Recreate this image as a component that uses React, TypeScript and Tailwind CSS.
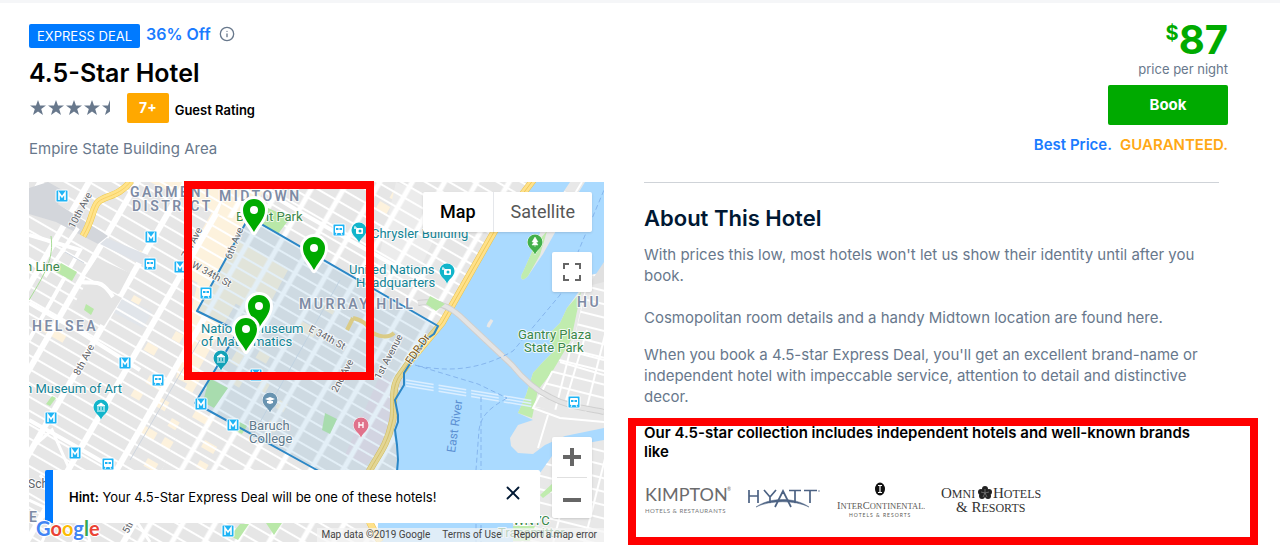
import React, { useState } from 'react';
import { Info, X } from 'lucide-react';
import clsx from 'clsx';

type Point = { x: number; y: number };

const hotelPins: Point[] = [
  { x: 254, y: 210 },
  { x: 314, y: 248 },
  { x: 259, y: 306 },
  { x: 246, y: 329 },
];

const subwayStops: Point[] = [
  { x: 62, y: 196 },
  { x: 151, y: 237 },
  { x: 180, y: 267 },
  { x: 125, y: 363 },
  { x: 51, y: 418 },
  { x: 75, y: 453 },
  { x: 201, y: 404 },
  { x: 233, y: 425 },
  { x: 256, y: 375 },
  { x: 228, y: 531 },
];

const trainStops: Point[] = [
  { x: 150, y: 264 },
  { x: 206, y: 293 },
  { x: 158, y: 380 },
  { x: 108, y: 464 },
  { x: 339, y: 230 },
  { x: 574, y: 402 },
];

const districtLabels = [
  { text: 'GARMENT', x: 130, y: 197 },
  { text: 'DISTRICT', x: 132, y: 211 },
  { text: 'MIDTOWN', x: 219, y: 201 },
  { text: 'HELSEA', x: 32, y: 331 },
  { text: 'MURRAY HILL', x: 299, y: 309 },
  { text: 'HU', x: 577, y: 307 },
  { text: 'E N', x: 29, y: 522 },
];

const streetLabels = [
  { text: '10th Ave', x: 74, y: 229, rotate: -62 },
  { text: '8th Ave', x: 79, y: 376, rotate: -62 },
  { text: '7th Ave', x: 187, y: 259, rotate: -62 },
  { text: '6th Ave', x: 231, y: 260, rotate: -68 },
  { text: 'W 34th St', x: 191, y: 267, rotate: 28 },
  { text: 'E 34th St', x: 308, y: 331, rotate: 28 },
  { text: '2nd Ave', x: 337, y: 393, rotate: -62 },
  { text: '1st Avenue', x: 380, y: 380, rotate: -62 },
  { text: '5th', x: 128, y: 534, rotate: -62 },
];

const beigeBlocks = [
  [41, 320, 30, 9], [140, 250, 12, 9], [134, 295, 9, 20], [176, 331, 9, 9], [150, 375, 20, 9], [135, 388, 10, 9],
  [160, 397, 11, 10], [172, 418, 9, 9], [142, 424, 18, 9], [165, 437, 10, 9], [148, 458, 12, 9], [148, 342, 12, 9],
  [176, 470, 9, 8], [254, 480, 10, 8], [196, 410, 20, 8], [205, 440, 14, 8], [200, 460, 10, 8], [194, 372, 9, 20],
  [240, 345, 9, 20], [235, 375, 10, 9], [260, 350, 12, 9], [262, 380, 9, 10], [270, 420, 10, 9], [280, 400, 9, 9],
  [394, 190, 14, 9], [404, 200, 22, 9], [380, 201, 12, 9], [300, 320, 20, 9], [325, 300, 14, 9], [420, 215, 9, 9],
];

const SHORE =
  'M29 182H533L494 233L443 322L438 327L433 334L424 341L421 349L413 359L404 373V385L395 400L398 420L394 435L398 455L396 470L378 523V542H29Z';
const QUEENS =
  'M604 272L590 275L580 290L567 308L560 323L548 335L555 350L543 362L533 373L526 395L518 413L533 420L518 425L510 438L511 446L518 453L533 454L545 445L565 436L604 428Z';
const GREENPOINT = 'M604 440L565 447L552 456L540 473V517L513 523V542H604Z';
const DEAL_AREA =
  'M249 217L438 326L434 334L424 341L421 348L413 359L404 373V385L395 400L398 415V422L395 430L397 445L398 460L396 484H342L315 469L195 403L221 360L238 331L197 311Z';

const HotelPin: React.FC<Point> = ({ x, y }) => (
  <g transform={`translate(${x} ${y})`}>
    <path
      d="M0 22C-4 14-11 9-11 0A11 11 0 1 1 11 0C11 9 4 14 0 22Z"
      fill="#00aa00"
      stroke="#fff"
      strokeWidth="6"
      strokeLinejoin="round"
      paintOrder="stroke"
    />
    <circle r="4" fill="#fff" />
  </g>
);

const PlacePin: React.FC<Point & { color: string; children?: React.ReactNode }> = ({ x, y, color, children }) => (
  <g transform={`translate(${x} ${y})`}>
    <path
      d="M0 13C-1 8-7.500 6-7.500 0A7.500 7.500 0 1 1 7.500 0C7.500 6 1 8 0 13Z"
      fill={color}
      stroke="#fff"
      strokeWidth="1"
      paintOrder="stroke"
    />
    {children}
  </g>
);

const Museum = () => <path d="M-4-1L0-4L4-1ZM-3 0V3M0 0V3M3 0V3M-4 4H4" fill="#fff" stroke="#fff" strokeWidth="1" />;

const Camera = () => (
  <g>
    <rect x="-3" y="-2" width="7" height="6" rx="1" fill="#fff" />
    <circle cx="1" cy="1" r="1.500" fill="#12b5cb" />
    <path d="M-4-4V-1M-5-2H-2" stroke="#fff" />
  </g>
);

const CityMap: React.FC = () => (
  <svg
    viewBox="29 182 575 360"
    preserveAspectRatio="xMidYMid slice"
    className="block h-full w-full font-[Roboto,sans-serif]"
    role="img"
    aria-label="Map of the Empire State Building area"
  >
    <defs>
      <pattern id="blocks" width="42" height="12" patternUnits="userSpaceOnUse" patternTransform="rotate(30)">
        <path d="M0 5H42" stroke="#fff" strokeWidth="2" />
        <path d="M0 0V12M42 0V12" stroke="#fff" strokeWidth="6" />
      </pattern>
      <pattern id="smallBlocks" width="28" height="12" patternUnits="userSpaceOnUse" patternTransform="rotate(30)">
        <path d="M0 5H28" stroke="#fff" strokeWidth="2" />
        <path d="M0 0V12M28 0V12" stroke="#fff" strokeWidth="5" />
      </pattern>
      <pattern id="queensBlocks" width="30" height="13" patternUnits="userSpaceOnUse" patternTransform="rotate(14)">
        <path d="M0 6H30M8 0V13" stroke="#fff" strokeWidth="2" />
      </pattern>
      <clipPath id="manhattan">
        <path d={SHORE} />
      </clipPath>
    </defs>

    <rect x="29" y="182" width="575" height="360" fill="#aadaff" />

    {/* Manhattan */}
    <g clipPath="url(#manhattan)">
      <rect x="29" y="182" width="575" height="360" fill="#e6e6e6" />
      <path d="M150 182H268L238 240L288 270L262 318L178 272L212 212Z" fill="#fdf2dd" />
      <path d="M200 272L240 296L190 385L176 378Z" fill="#fdf2dd" />
      <g transform="rotate(30)">
        {beigeBlocks.map(([x, y, w, h], i) => {
          // page position turned into the rotated street grid
          const u = x * 0.866 + y * 0.5;
          const v = y * 0.866 - x * 0.5;
          return <rect key={i} x={u} y={v} width={w} height={h} fill="#fdf2dd" />;
        })}
      </g>
      <path d="M120 295L152 312L143 328L113 312Z" fill="#e1e5ea" />
      <path d="M396 182L450 205L410 290L375 275Z" fill="#ececec" />
      <path d="M380 375L396 384L388 440L366 465L345 455Z" fill="#ebdfe5" />
      <path d="M29 182H230L217 215L250 222L197 311L238 331L175 440L130 542H29Z" fill="url(#blocks)" />
      <path d="M230 182H540V542H130L175 440L238 331L197 311L250 222L217 215Z" fill="url(#smallBlocks)" />
      <path d="M29 188L48 182L66 192L58 204L86 222L108 236L98 244L56 222L29 214Z" fill="#d3d6db" />
      <path d="M107 238L150 256L145 266L100 244Z" fill="#dfe3e9" />
      <path d="M88 280L122 298L104 326L72 308Z" fill="#e4e4e4" />
      <path d="M97 258L130 273L119 294L85 276Z" fill="#e4e4e4" />
      <path d="M29 260L46 275L78 228M80 282C98 284 100 278 113 297M29 303L80 332L140 370M29 420L70 443L120 472M29 235L80 250L52 300L29 340M250 182L300 212L360 246L420 280" stroke="#fff" strokeWidth="4" fill="none" />
      <path d="M29 450L52 430L72 475M40 475L60 500L42 542M70 470L90 542M29 500L80 524L150 510M110 480L150 542" stroke="#fff" strokeWidth="3" fill="none" />
      <path d="M65 252L84 263M200 340L130 460" stroke="#cfd6df" strokeWidth="1" fill="none" />
      <path d="M61 263L77 272L72 281L56 272ZM86 304L94 309L91 315L84 310ZM234 419L247 426L242 434L230 428ZM209 378L228 388L214 408L203 402ZM268 208L290 218L278 234L257 223ZM325 413L337 419L330 434L322 430ZM240 524L249 524L238 540L230 536ZM52 396L56 398L50 406L46 404ZM266 523L282 523L274 535Z" fill="#b9e8a8" />
      <path d="M51 236C54 258 46 272 29 300" stroke="#a9dd98" strokeWidth="1" fill="none" />
      <path d="M340 280L250 440" stroke="#d6dde5" strokeWidth="1" fill="none" />
      <path d="M131 181C120 196 104 196 98 202C92 209 93 219 83 236" stroke="#eec94d" strokeWidth="7" fill="none" />
      <path d="M131 181C120 196 104 196 98 202C92 209 93 219 83 236" stroke="#ffe38b" strokeWidth="6" fill="none" />
      <path d="M131 181C120 196 104 196 98 202C92 209 93 219 83 236" stroke="#f7d065" strokeWidth="1" fill="none" />
      <path d="M353 318C362 320 371 326 368 332M353 318L347 330M369 330C378 338 389 338 394 333" stroke="#f4d478" strokeWidth="4" fill="none" />
    </g>

    {/* Roosevelt Island */}
    <path d="M585 182L562 220L543 254L528 276C522 283 519 278 523 272L535 245L546 218L570 182Z" fill="#e8e8e8" />
    <path d="M547 231L540 255L528 276C522 283 519 278 523 272L535 245Z" fill="#c0ecae" />
    <path d="M582 182L554 228M546 210L562 219M564 192L574 197" stroke="#fff" strokeWidth="2" fill="none" />

    {/* Queens and Greenpoint */}
    <path d={QUEENS} fill="#e8e8e8" />
    <path d="M581 292L567 308L560 323L548 335L555 350L543 362L533 373L526 395L518 413L532 418L538 390L552 372L571 340Z" fill="#c0ecae" />
    <path d="M588 276L604 272V413L566 411L533 407L552 370L574 340Z" fill="url(#queensBlocks)" />
    <path d="M552 372L533 408L560 418L604 422M548 415L538 448M560 362L604 375M566 350L604 360M587 330L566 400" stroke="#fff" strokeWidth="2" fill="none" />
    <path d={GREENPOINT} fill="#e8e8e8" />
    <path d={GREENPOINT} fill="url(#queensBlocks)" />
    <path d="M540 495L553 483L556 488L543 498ZM513 526L535 526L530 541H513Z" fill="#c0ecae" />
    <path d="M588 286L604 262V282Z" fill="#e0e0e0" />

    {/* Expressway and bridges */}
    <path d="M534 179L494 232L442 323L410 361L398 378C390 392 396 412 392 423C387 446 378 455 370 470L370 523L380 542" stroke="#e9c34c" strokeWidth="7" fill="none" />
    <path d="M534 179L494 232L442 323L410 361L398 378C390 392 396 412 392 423C387 446 378 455 370 470L370 523L380 542" stroke="#ffe18a" strokeWidth="6" fill="none" />
    <path d="M534 179L494 232L442 323L410 361L398 378C390 392 396 412 392 423C387 446 378 455 370 470" stroke="#efc958" strokeWidth="1" fill="none" />
    <path d="M418 303C436 300 450 307 460 316L512 365C520 375 533 389 550 397C568 407 585 408 604 412" stroke="#cfcfcf" strokeWidth="6" fill="none" />
    <path d="M418 303C436 300 450 307 460 316L512 365C520 375 533 389 550 397C568 407 585 408 604 412" stroke="#e4e4e4" strokeWidth="4" fill="none" />
    <path d="M430 296L445 304L436 311L426 304Z" fill="#b9e8a8" />
    <path d="M406 380L535 401M406 383L535 404M406 386L535 407" stroke="#dbeeff" strokeWidth="1.500" strokeDasharray="28 5" fill="none" />
    <path d="M489 324L492 320L488 327Z" stroke="#e8e8e8" strokeWidth="3" />
    <path d="M415 365L478 384L507 398M418 366C450 372 480 370 513 351L560 295L604 190M507 398C490 408 481 415 479 430L476 470M481 397V542M476 524V542" stroke="#86b6ee" strokeWidth="1" strokeDasharray="5 3" fill="none" />

    {/* Deal area */}
    <path d={DEAL_AREA} fill="#5ba3cf" fillOpacity="0.17" stroke="#2c87c6" strokeWidth="2" strokeLinejoin="round" />

    {subwayStops.map(({ x, y }) => (
      <g key={`${x}-${y}`} transform={`translate(${x} ${y})`}>
        <rect x="-6" y="-6" width="12" height="12" rx="1" fill="#1eb4f5" stroke="#fff" strokeWidth="1" />
        <path d="M-3 4V-3L0 1L3-3V4" stroke="#fff" strokeWidth="1.600" fill="none" />
      </g>
    ))}
    {trainStops.map(({ x, y }) => (
      <g key={`${x}-${y}`} transform={`translate(${x} ${y})`}>
        <rect x="-6" y="-6" width="12" height="12" rx="1" fill="#1eb4f5" stroke="#fff" strokeWidth="1" />
        <rect x="-4" y="-4" width="8" height="7" rx="1" fill="#fff" />
        <path d="M-3-2H-.5V0H-3ZM.5-2H3V0H.5Z" fill="#1eb4f5" />
        <path d="M-2 3L-3 5M2 3L3 5" stroke="#fff" />
      </g>
    ))}

    {/* Labels */}
    <g stroke="#fff" strokeWidth="2" strokeOpacity="0.8" strokeLinejoin="round" paintOrder="stroke">
      <g fill="#7e8ca5" fontSize="14" fontWeight="600" letterSpacing="2.500">
        {districtLabels.map(({ text, x, y }) => (
          <text key={text} x={x} y={y}>{text}</text>
        ))}
      </g>
      <g fill="#5f6368" fontSize="10">
        {streetLabels.map(({ text, x, y, rotate }) => (
          <text key={text} transform={`translate(${x} ${y}) rotate(${rotate})`}>{text}</text>
        ))}
        <text x="28" y="488" fontSize="12">Sch</text>
        <text transform="translate(411 365) rotate(-55)" fill="#7a5410" fontSize="11">FDR Dr</text>
      </g>
      <g fill="#3a8749" fontSize="13">
        <text x="25" y="271">h Line</text>
        <text x="236" y="221">Bryant Park</text>
        <text x="518" y="339">Gantry Plaza</text>
        <text x="524" y="352">State Park</text>
        <text x="513" y="525">WNYC</text>
        <text x="498" y="537">Transmitter</text>
      </g>
      <g fill="#138496" fontSize="13">
        <text x="371" y="238">Chrysler Building</text>
        <text x="349" y="274">United Nations</text>
        <text x="356" y="287">Headquarters</text>
        <text x="201" y="333">National Museum</text>
        <text x="201" y="346">of Mathematics</text>
        <text x="25" y="393">n Museum of Art</text>
      </g>
      <g fill="#60798b" fontSize="13">
        <text x="249" y="430">Baruch</text>
        <text x="249" y="443">College</text>
      </g>
    </g>
    <text transform="translate(455 453) rotate(-82)" fill="#5b8fd2" fontSize="12">East River</text>

    <PlacePin x={359} y={230} color="#12b5cb"><Camera /></PlacePin>
    <PlacePin x={447} y={271} color="#12b5cb"><Camera /></PlacePin>
    <PlacePin x={101} y={407} color="#12b5cb"><Museum /></PlacePin>
    <PlacePin x={221} y={358} color="#12a2b8"><Museum /></PlacePin>
    <PlacePin x={270} y={400} color="#6893b0">
      <path d="M-5-1L0-3L5-1L0 1ZM-3 1V3L0 4L3 3V1" fill="#fff" />
    </PlacePin>
    <PlacePin x={361} y={425} color="#e0728b">
      <path d="M-2-3V3M2-3V3M-2 0H2" stroke="#fff" strokeWidth="1.300" />
    </PlacePin>
    <PlacePin x={535} y={242} color="#43b04a">
      <path d="M0-5L3 0H1L3 3H-3L-1 0H-3ZM0 3V5" fill="#fff" stroke="#fff" strokeWidth=".5" />
    </PlacePin>

    {hotelPins.map((pin) => (
      <HotelPin key={`${pin.x}-${pin.y}`} {...pin} />
    ))}
  </svg>
);

const BrandLogos: React.FC = () => (
  <div className="flex items-start gap-4 px-px pt-5">
    <svg viewBox="0 0 86 40" className="h-10 w-[86px]" role="img" aria-label="Kimpton Hotels & Restaurants">
      <text x="0" y="20" fontFamily="Lato, sans-serif" fontSize="18" fill="#6b6b6d">KIMPTON</text>
      <text x="82" y="10" fontFamily="Lato, sans-serif" fontSize="5" fill="#6b6b6d">®</text>
      <text x="0" y="32" fontFamily="Lato, sans-serif" fontSize="6" letterSpacing=".5" fill="#77777a">HOTELS &amp; RESTAURANTS</text>
    </svg>
    <svg viewBox="0 0 74 40" className="h-10 w-[74px]" role="img" aria-label="Hyatt">
      <g stroke="#4c6283" strokeWidth="1.700" fill="none">
        <path d="M2 9V22M11 9V22M2 15H11M17 9L23 16V22M29 9L23 16M28 26L36 10L44 26M42 9.500H54M48 9V22M57 9.500H70M63 9V22" />
      </g>
      <path d="M9 26C23 16 48 16 62 26C48 19 23 19 9 26Z" fill="#4c6283" stroke="#4c6283" strokeWidth=".5" />
      <circle cx="72" cy="10" r=".7" fill="#4c6283" />
    </svg>
    <svg viewBox="0 0 88 40" className="h-10 w-[88px]" role="img" aria-label="InterContinental Hotels & Resorts">
      <ellipse cx="43" cy="8" rx="5" ry="6.500" fill="#111" />
      <path d="M41 4.500H45M43 4V12M41 11.500H45" stroke="#fff" strokeWidth="1.200" />
      <g fontFamily="Liberation Serif, serif" fill="#5b5a55">
        <text x="0" y="28" fontSize="10.500">
          I<tspan fontSize="8.500">NTER</tspan>C<tspan fontSize="8.500">ONTINENTAL.</tspan>
        </text>
        <text x="12" y="36" fontFamily="Lato, sans-serif" fontSize="5" letterSpacing="1">HOTELS &amp; RESORTS</text>
      </g>
    </svg>
    <svg viewBox="0 0 104 40" className="h-10 w-[104px]" role="img" aria-label="Omni Hotels & Resorts">
      <g fontFamily="Liberation Serif, serif" fill="#333" fontSize="15">
        <text x="0" y="17">O<tspan fontSize="12">MNI</tspan></text>
        <text x="52" y="17">H<tspan fontSize="12">OTELS</tspan></text>
        <text x="15" y="31">&amp; R<tspan fontSize="12">ESORTS</tspan></text>
      </g>
      <g fill="#222">
        <circle cx="44" cy="8" r="3" />
        <circle cx="48" cy="11" r="3" />
        <circle cx="47" cy="15" r="3" />
        <circle cx="41" cy="15" r="3" />
        <circle cx="40" cy="11" r="3" />
        <circle cx="44" cy="12" r="3" />
        <path d="M44 12V8M44 12L48 11M44 12L46 16M44 12L42 16M44 12L40 11" stroke="#999" strokeWidth=".6" />
      </g>
    </svg>
  </div>
);

const Stars: React.FC = () => (
  <svg viewBox="0 0 90 18" className="h-[18px] w-[90px]" role="img" aria-label="4.5 stars" fill="#68788c">
    {[9, 27, 45, 63].map((x) => (
      <path key={x} transform={`translate(${x} 9)`} d="M0-8L2-2.500H8L3.200 1L5 7L0 3.500L-5 7L-3.200 1L-8-2.500H-2Z" />
    ))}
    <path transform="translate(81 9)" d="M0-8V3.500L-5 7L-3.200 1L-8-2.500H-2Z" />
  </svg>
);

export const HotelDeal: React.FC = () => {
  const [mapType, setMapType] = useState<'map' | 'satellite'>('map');
  const [showHint, setShowHint] = useState(true);

  return (
    <div className="border-t-[3px] border-[#f5f6f8] bg-white pb-[3px] font-[Inter,sans-serif] text-black">
      {/* Deal header */}
      <header className="flex items-start justify-between pl-[29px] pr-[52px]">
        <div className="pt-[17px]">
          <div className="flex items-center">
            <span className="mt-1 rounded-xs bg-[#007aff] px-2 text-[13px] leading-6 text-white">EXPRESS DEAL</span>
            <span className="ml-[6px] text-base font-semibold text-[#1a7bff]">36% Off</span>
            <button aria-label="About this discount" className="ml-2 text-[#68788c]">
              <Info className="h-4 w-4" strokeWidth={2} />
            </button>
          </div>
          <h1 className="mt-[9px] text-[25px] leading-8 font-semibold">4.5-Star Hotel</h1>
          <div className="mt-1 flex items-center">
            <Stars />
            <span className="ml-2 rounded-xs bg-[#ffa800] px-3 text-sm font-bold leading-[30px] text-white">7+</span>
            <span className="ml-[6px] pt-1 text-[13px] leading-4 font-semibold">Guest Rating</span>
          </div>
          <p className="mt-4 text-[15px] leading-5 text-[#68788c]">Empire State Building Area</p>
        </div>

        <div className="flex flex-col items-end pt-4">
          <div className="flex items-start font-bold text-[#00aa00]">
            <span className="pt-1 text-xl leading-5">$</span>
            <span className="text-[40px] leading-[42px]">87</span>
          </div>
          <span className="text-[13px] leading-4 text-[#68788c]">price per night</span>
          <button className="mt-2 h-10 w-[120px] rounded-xs bg-[#00aa00] text-[15px] font-bold text-white">Book</button>
          <div className="mt-[10px] flex gap-2 text-[15px] leading-5 font-semibold">
            <span className="text-[#1a7bff]">Best Price.</span>
            <span className="text-[#ffa814]">GUARANTEED.</span>
          </div>
        </div>
      </header>

      <main className="mt-[23px] grid grid-cols-2 gap-10 pl-[29px] pr-[61px]">
        {/* Map section */}
        <section className="relative h-[360px]">
          <CityMap />

          <div className="absolute -top-px left-[155px] h-[199px] w-[190px] border-8 border-[#ff0000]" />

          <div className="absolute right-3 top-[10px] flex rounded-xs bg-white font-[Roboto,sans-serif] text-lg leading-10 shadow">
            <button
              onClick={() => setMapType('map')}
              className={clsx('px-[17px]', mapType === 'map' ? 'font-medium text-black' : 'text-[#565656]')}
            >
              Map
            </button>
            <button
              onClick={() => setMapType('satellite')}
              className={clsx('border-l border-gray-200 px-[17px]', mapType === 'satellite' ? 'font-medium text-black' : 'text-[#565656]')}
            >
              Satellite
            </button>
          </div>

          <button
            aria-label="Toggle fullscreen"
            className="absolute right-3 top-[70px] flex h-10 w-10 items-center justify-center rounded-xs bg-white shadow"
          >
            <svg viewBox="0 0 18 18" className="h-[18px] w-[18px]" fill="none" stroke="#666" strokeWidth="2">
              <path d="M1 6V1H6M12 1H17V6M17 12V17H12M6 17H1V12" />
            </svg>
          </button>

          <div className="absolute right-3 top-[255px] flex w-10 flex-col items-center rounded-xs bg-white shadow">
            <button aria-label="Zoom in" className="flex h-10 w-10 items-center justify-center">
              <svg viewBox="0 0 18 18" className="h-[18px] w-[18px]" stroke="#666" strokeWidth="4">
                <path d="M9 0V18M0 9H18" />
              </svg>
            </button>
            <div className="h-px w-[30px] bg-[#e0e0e0]" />
            <button aria-label="Zoom out" className="flex h-10 w-10 items-center justify-center">
              <svg viewBox="0 0 18 18" className="h-[18px] w-[18px]" stroke="#666" strokeWidth="4">
                <path d="M0 11H18" />
              </svg>
            </button>
          </div>

          {showHint && (
            <div className="absolute left-4 right-16 top-[288px] flex h-[53px] items-center rounded-xs border-l-8 border-[#007aff] bg-white px-4 text-[13px]">
              <p className="pt-0.5">
                <strong className="font-semibold">Hint:</strong> Your 4.5-Star Express Deal will be one of these hotels!
              </p>
              <button aria-label="Close hint" onClick={() => setShowHint(false)} className="mb-2 ml-auto text-[#001833]">
                <X className="h-[22px] w-[22px]" strokeWidth={2} />
              </button>
            </div>
          )}

          <div className="absolute bottom-0 left-[7px] font-[Lato,sans-serif] text-xl leading-7">
            <a href="#google" aria-label="Google" className="font-bold [paint-order:stroke] [-webkit-text-stroke:2px_white]">
              <span className="text-[#4285f4]">G</span>
              <span className="text-[#ea4335]">o</span>
              <span className="text-[#fbbc05]">o</span>
              <span className="text-[#4285f4]">g</span>
              <span className="text-[#34a853]">l</span>
              <span className="text-[#ea4335]">e</span>
            </a>
          </div>

          <div className="absolute bottom-0 right-0 flex gap-3 bg-[#f5f5f5]/70 pl-1 pr-[7px] font-[Roboto,sans-serif] text-[10px] leading-[14px] text-[#444]">
            <span>Map data ©2019 Google</span>
            <a href="#terms">Terms of Use</a>
            <a href="#report">Report a map error</a>
          </div>
        </section>

        {/* About section */}
        <section className="border-t border-[#cfd3d8] pt-[19px] text-[15px] leading-[21px] text-[#68788c]">
          <h2 className="text-[22px] leading-8 font-semibold text-[#001833]">About This Hotel</h2>
          <p className="mt-[10px]">
            With prices this low, most hotels won't let us show their identity until after you book.
          </p>
          <p className="mt-[21px]">Cosmopolitan room details and a handy Midtown location are found here.</p>
          <p className="mt-4">
            When you book a 4.5-star Express Deal, you'll get an excellent brand-name or independent hotel with
            impeccable service, attention to detail and distinctive decor.
          </p>
          <div className="relative mt-4">
            <div className="absolute -left-4 -right-[39px] -top-[5px] h-[127px] border-8 border-[#ff0000]" />
            <h3 className="pr-4 text-[15px] leading-[19px] font-semibold text-black">
              Our 4.5-star collection includes independent hotels and well-known brands like
            </h3>
            <BrandLogos />
          </div>
        </section>
      </main>
    </div>
  );
};

export default HotelDeal;
